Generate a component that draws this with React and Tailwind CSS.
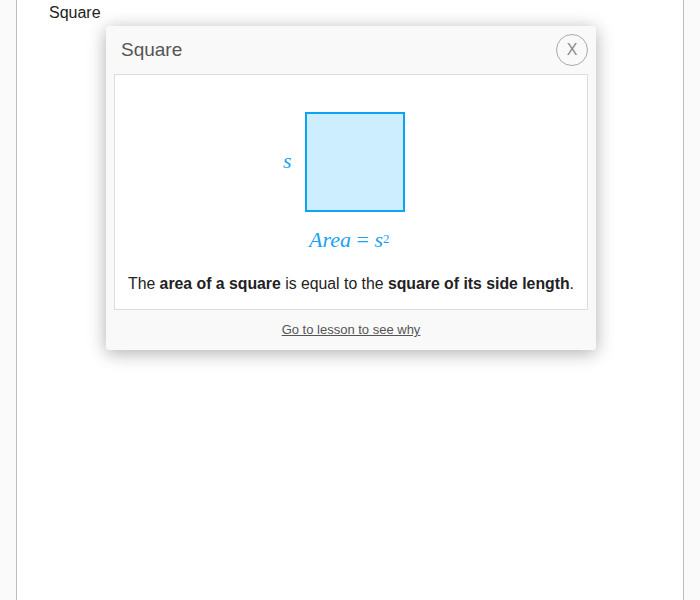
export default function App() {
  return (
    <div className="min-h-[600px] bg-[#fafafa] flex justify-center" style={{ fontFamily: '"Liberation Sans", Arial, sans-serif' }}>
      <div className="relative w-[668px] ml-[16px] mr-[16px] bg-white border-x border-[#bdbdbd] min-h-[600px]">
        <div className="pl-[32px] pt-[3px] text-[16px] leading-[20px] text-[#222]">Square</div>

        {/* Popover */}
        <div className="absolute left-[89px] top-[26px] w-[490px] bg-[#f9f9f9] rounded-[3px] shadow-[0_3px_18px_rgba(0,0,0,0.32)]">
          <div className="flex items-center justify-between h-[48px] pl-[15px] pr-[8px]">
            <h2 className="text-[19px] text-[#555] font-normal">Square</h2>
            <button className="w-[32px] h-[32px] rounded-full border border-[#aaa] text-[#8a8a8a] text-[16px] leading-[16px] pb-[1px] flex items-center justify-center">
              X
            </button>
          </div>

          <div className="mx-[8px] bg-white border border-[#dcdcdc]">
            <svg width="472" height="182" className="block" style={{ fontFamily: '"Liberation Serif", "Times New Roman", serif' }}>
              <rect x="191" y="38" width="98" height="98" fill="#cdeeff" stroke="#0ea2f2" strokeWidth="2" />
              <text x="168" y="93" fontSize="22" fontStyle="italic" fill="#1aa2f0">s</text>
              <text x="194" y="172" fontSize="22" fill="#1aa2f0">
                <tspan fontStyle="italic">Area</tspan>
                <tspan> = </tspan>
                <tspan fontStyle="italic">s</tspan>
                <tspan fontSize="13" dy="-4">2</tspan>
              </text>
            </svg>
            <p className="mt-[17px] text-center text-[15.8px] leading-[20px] text-[#222] pb-[15px]">
              The <b>area of a square</b> is equal to the <b>square of its side length</b>.
            </p>
          </div>

          <div className="h-[40px] flex items-center justify-center">
            <a href="#" className="text-[13px] text-[#555] underline">Go to lesson to see why</a>
          </div>
        </div>
      </div>
    </div>
  );
}
